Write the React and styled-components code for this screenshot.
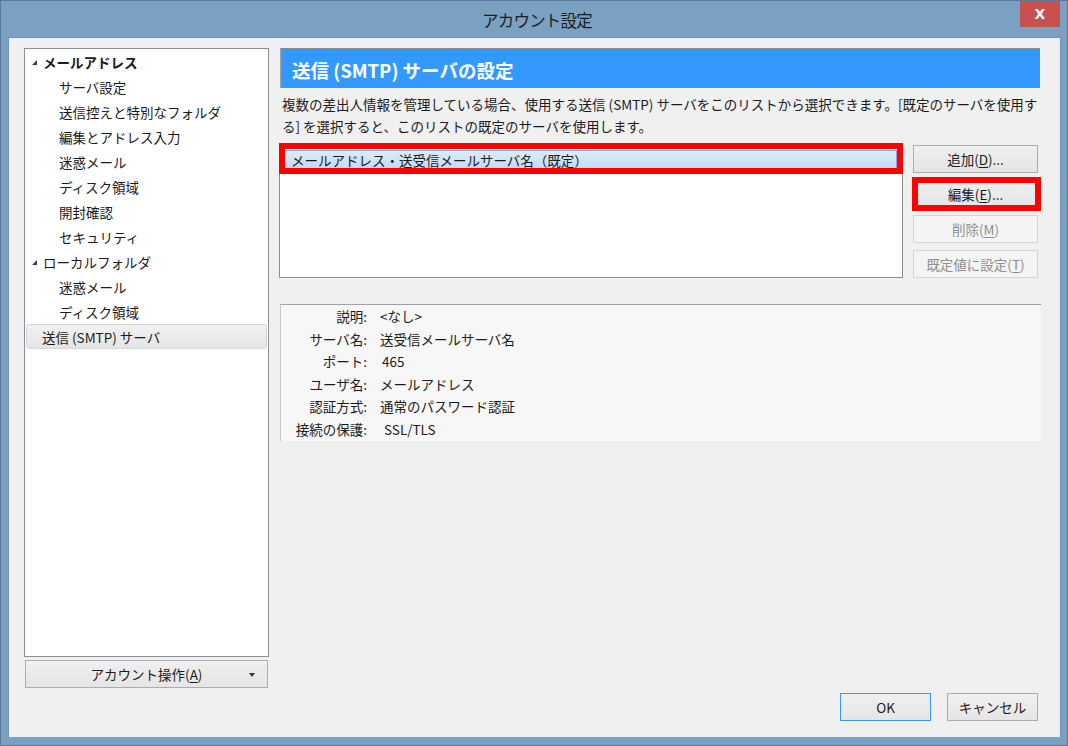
import React from 'react';
import styled, { createGlobalStyle } from 'styled-components';

const GlobalStyle = createGlobalStyle`
  html, body {
    margin: 0;
    padding: 0;
    background: #7aa1c2;
  }
  body {
    font-family: "Noto Sans CJK JP", "Noto Sans", sans-serif;
    font-size: 13.5px;
    color: #1b1b1b;
  }
`;

const Window = styled.div`
  width: 1068px;
  height: 746px;
  box-sizing: border-box;
  background: #7aa1c2;
  border: 1px solid #58799a;
  display: flex;
  flex-direction: column;
`;

const TitleBar = styled.div`
  height: 36px;
  position: relative;
  display: flex;
  align-items: center;
  justify-content: center;
`;

const Title = styled.div`
  font-size: 16.5px;
  color: #1e1e1e;
  margin-left: 6px;
  margin-top: 2px;
  letter-spacing: -0.8px;
`;

const CloseButton = styled.div`
  position: absolute;
  top: 0;
  right: 7px;
  width: 40px;
  height: 26px;
  background: #c75050;
  color: #fff;
  font-family: "DejaVu Sans", sans-serif;
  font-weight: bold;
  font-size: 14px;
  display: flex;
  align-items: center;
  justify-content: center;
`;

const Client = styled.div`
  margin: 0 6px 0 7px;
  height: 700px;
  box-sizing: border-box;
  background: #f0f0f0;
  border: 1px solid #6f93b4;
  border-bottom: none;
  display: grid;
  grid-template-columns: 245px 1fr;
  column-gap: 11px;
  padding: 10px 19px 16px 15px;
`;

const LeftColumn = styled.div`
  display: flex;
  flex-direction: column;
  gap: 3px;
  padding-bottom: 33px;
`;

const Tree = styled.div`
  flex: 1;
  background: #fff;
  border: 1px solid #8a8f96;
  padding: 0 1px;
`;

const TreeRow = styled.div`
  height: 25px;
  display: flex;
  align-items: center;
  box-sizing: border-box;
  padding-left: ${p => (p.$child ? 33 : p.$arrow ? 6 : 17)}px;
  font-weight: ${p => (p.$bold ? 700 : 400)};
  white-space: nowrap;
  ${p =>
    p.$selected &&
    `
    background: linear-gradient(#f2f2f2, #e4e4e4);
    border: 1px solid #d6d6d6;
    border-radius: 3px;
    padding-left: 15px;
  `}
`;

const Expander = styled.span`
  width: 0;
  height: 0;
  border-left: 5px solid transparent;
  border-bottom: 5px solid #404040;
  margin-right: 6px;
  margin-top: 2px;
`;

const DropButton = styled.div`
  height: 28px;
  box-sizing: border-box;
  margin: 0 1px 0 1px;
  border: 1px solid #acacac;
  background: linear-gradient(#f0f0f0, #e5e5e5);
  display: flex;
  align-items: center;
  justify-content: center;
  position: relative;
`;

const DropArrow = styled.span`
  position: absolute;
  right: 12px;
  top: 12px;
  width: 0;
  height: 0;
  border-left: 3px solid transparent;
  border-right: 3px solid transparent;
  border-top: 4px solid #333;
`;

const RightColumn = styled.div`
  display: flex;
  flex-direction: column;
`;

const Header = styled.div`
  height: 40px;
  box-sizing: border-box;
  background: #3399ff;
  border-top: 1px solid #8a8a8a;
  border-left: 1px solid #a5a5a5;
  color: #fff;
  font-weight: 700;
  font-size: 18.5px;
  display: flex;
  align-items: center;
  padding-left: 11px;
  padding-top: 2px;
  margin-right: 1px;
`;

const Description = styled.p`
  margin: 5px 0 0 2px;
  line-height: 22px;
  white-space: nowrap;
`;

const ServerArea = styled.div`
  display: flex;
  margin-top: 7px;
  gap: 10px;
`;

const ServerList = styled.div`
  width: 624px;
  height: 134px;
  box-sizing: border-box;
  margin-left: -1px;
  background: #fff;
  border: 1px solid #8a8f96;
  padding: 5px 5px 0 3px;
`;

const ServerItem = styled.div`
  position: relative;
  height: 19px;
  box-sizing: border-box;
  border: 1px solid #84acdd;
  background: linear-gradient(#dcebfc, #c4dcf8);
  display: flex;
  align-items: center;
  padding-left: 7px;
`;

const Highlight = styled.span`
  position: absolute;
  top: ${p => p.$top}px;
  right: ${p => p.$right}px;
  bottom: ${p => p.$bottom}px;
  left: ${p => p.$left}px;
  border: 6px solid #ff0000;
  pointer-events: none;
`;

const ButtonStack = styled.div`
  width: 125px;
  display: flex;
  flex-direction: column;
  gap: 7px;
  padding-top: 1px;
`;

const Button = styled.div`
  position: relative;
  height: 28px;
  width: ${p => p.$width || 125}px;
  box-sizing: border-box;
  border: 1px solid ${p => (p.$default ? '#3399ff' : p.$disabled ? '#d5d5d5' : '#acacac')};
  background: ${p => (p.$disabled ? '#f4f4f4' : 'linear-gradient(#f0f0f0, #e5e5e5)')};
  color: ${p => (p.$disabled ? '#8f8f8f' : '#1b1b1b')};
  display: flex;
  align-items: center;
  justify-content: center;
  white-space: nowrap;
`;

const Key = styled.span`
  text-decoration: underline;
  text-underline-offset: 2px;
`;

const Details = styled.div`
  margin-top: 26px;
  height: 137px;
  box-sizing: border-box;
  background: #f7f7f7;
  border-top: 1px solid #a0a0a0;
  border-left: 1px solid #c8c8c8;
  padding-top: 0;
  display: grid;
  grid-template-columns: 86px 1fr;
  column-gap: 13px;
  grid-auto-rows: 22.5px;
  align-items: center;
`;

const Label = styled.div`
  text-align: right;
  white-space: nowrap;
`;

const Value = styled.div`
  padding-left: ${p => p.$shift || 0}px;
  white-space: nowrap;
`;

const Footer = styled.div`
  margin-top: auto;
  display: flex;
  justify-content: flex-end;
  gap: 16px;
  padding-right: 3px;
`;

const treeItems = [
  { text: 'メールアドレス', arrow: true, bold: true },
  { text: 'サーバ設定', child: true },
  { text: '送信控えと特別なフォルダ', child: true },
  { text: '編集とアドレス入力', child: true },
  { text: '迷惑メール', child: true },
  { text: 'ディスク領域', child: true },
  { text: '開封確認', child: true },
  { text: 'セキュリティ', child: true },
  { text: 'ローカルフォルダ', arrow: true },
  { text: '迷惑メール', child: true },
  { text: 'ディスク領域', child: true },
  { text: '送信 (SMTP) サーバ', selected: true },
];

const details = [
  ['説明:', '<なし>'],
  ['サーバ名:', '送受信メールサーバ名'],
  ['ポート:', '465', 2],
  ['ユーザ名:', 'メールアドレス'],
  ['認証方式:', '通常のパスワード認証'],
  ['接続の保護:', 'SSL/TLS', 4],
];

export default function App() {
  return (
    <>
      <GlobalStyle />
      <Window>
        <TitleBar>
          <Title>アカウント設定</Title>
          <CloseButton>X</CloseButton>
        </TitleBar>
        <Client>
          <LeftColumn>
            <Tree>
              {treeItems.map((item, i) => (
                <TreeRow
                  key={i}
                  $child={item.child}
                  $arrow={item.arrow}
                  $bold={item.bold}
                  $selected={item.selected}
                >
                  {item.arrow && <Expander />}
                  {item.text}
                </TreeRow>
              ))}
            </Tree>
            <DropButton>
              アカウント操作(<Key>A</Key>)
              <DropArrow />
            </DropButton>
          </LeftColumn>

          <RightColumn>
            <Header>送信 (SMTP) サーバの設定</Header>
            <Description>
              複数の差出人情報を管理している場合、使用する送信 (SMTP) サーバをこのリストから選択できます。[既定のサーバを使用す
              <br />
              る] を選択すると、このリストの既定のサーバを使用します。
            </Description>

            <ServerArea>
              <ServerList>
                <ServerItem>
                  メールアドレス・送受信メールサーバ名（既定）
                  <Highlight $top={-8} $right={-7} $bottom={-6} $left={-5} />
                </ServerItem>
              </ServerList>
              <ButtonStack>
                <Button>
                  追加(<Key>D</Key>)...
                </Button>
                <Button>
                  編集(<Key>E</Key>)...
                  <Highlight $top={-4} $right={-4} $bottom={-4} $left={-2} />
                </Button>
                <Button $disabled>
                  削除(<Key>M</Key>)
                </Button>
                <Button $disabled>
                  既定値に設定(<Key>T</Key>)
                </Button>
              </ButtonStack>
            </ServerArea>

            <Details>
              {details.map(([label, value, shift]) => (
                <React.Fragment key={label}>
                  <Label>{label}</Label>
                  <Value $shift={shift}>{value}</Value>
                </React.Fragment>
              ))}
            </Details>

            <Footer>
              <Button $width={91} $default>
                OK
              </Button>
              <Button $width={91}>キャンセル</Button>
            </Footer>
          </RightColumn>
        </Client>
      </Window>
    </>
  );
}
